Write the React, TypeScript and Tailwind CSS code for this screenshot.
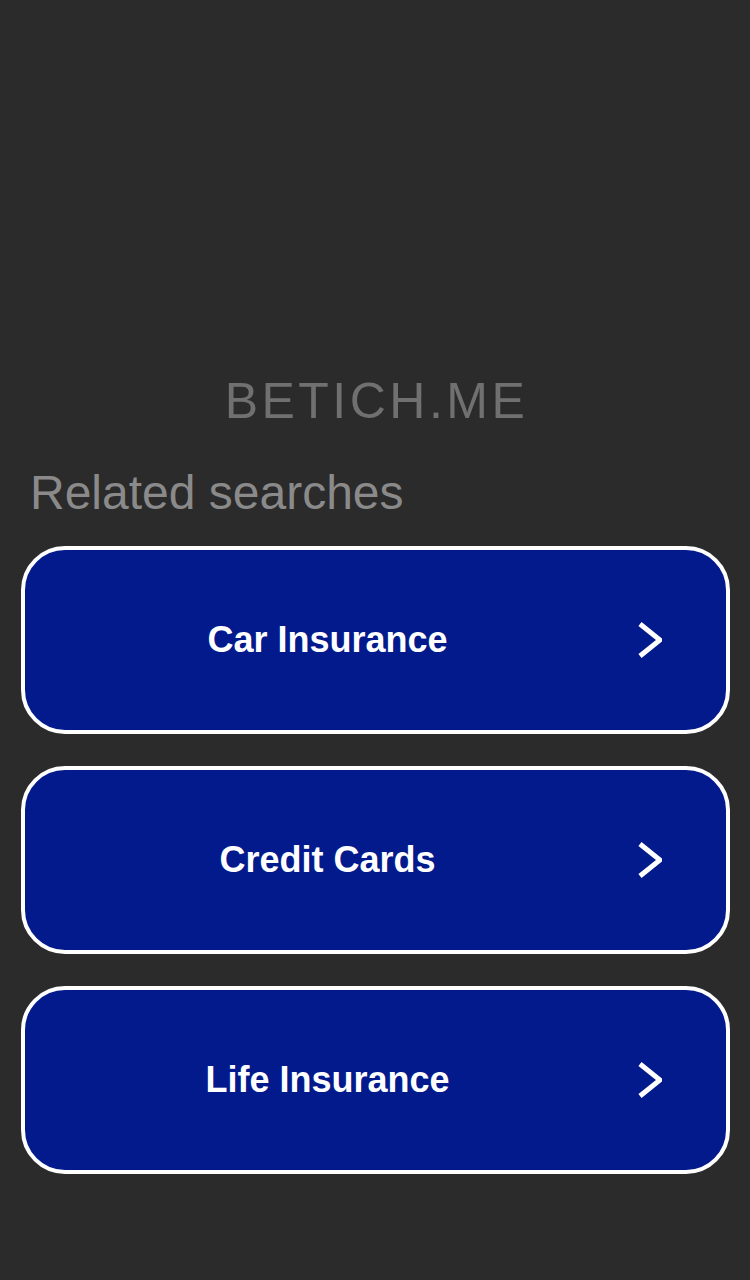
import React from "react";

const searches = ["Car Insurance", "Credit Cards", "Life Insurance"];

function Chevron() {
    return (
        <svg width="24" height="36" viewBox="0 0 24 36" className="ml-2 mr-[64px] shrink-0">
            <polyline points="2,2 22,18 2,34" fill="none" stroke="white" strokeWidth="5" strokeLinecap="butt" strokeLinejoin="miter" />
        </svg>
    );
}

export default function App() {
    return (
        <div className="min-h-screen bg-[#2b2b2b] pt-[376px] pb-[100px]" style={{ fontFamily: '"Liberation Sans", Arial, sans-serif' }}>
            <h1 className="text-center text-[50px] leading-none tracking-[3.5px] text-[#707070] pl-[3px]">BETICH.ME</h1>

            <h2 className="mt-[43px] px-[30px] text-[48px] leading-none text-[#8a8a8a]">Related searches</h2>

            <div className="mt-[29px] flex flex-col gap-[32px] px-[21px]">
                {searches.map((s) => (
                    <a
                        key={s}
                        href="#"
                        className="flex h-[188px] w-[709px] items-center rounded-[44px] border-[4px] border-white bg-[#021a8c] text-white"
                    >
                        <span className="flex-1 text-center text-[36px] font-bold leading-none">{s}</span>
                        <Chevron />
                    </a>
                ))}
            </div>
        </div>
    );
}
